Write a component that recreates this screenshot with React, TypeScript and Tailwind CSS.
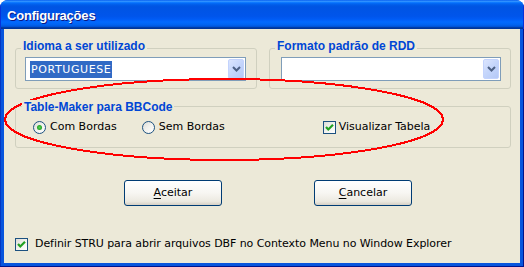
import React from "react";

const reg = "font-['DejaVu_Sans',sans-serif] text-[11px] text-black";
const boldLbl =
  "font-['Liberation_Sans',Arial,sans-serif] font-bold text-[12px] leading-[14px] text-[#0046d5]";

function Chevron() {
  return (
    <svg width="9" height="6" viewBox="0 0 9 6">
      <path d="M1 1 L4.5 4.5 L8 1" fill="none" stroke="#4d6185" strokeWidth="2" />
    </svg>
  );
}

function Combo({ width, selected }: { width: string; selected?: string }) {
  return (
    <div className={`${width} h-[24px] border border-[#7f9db9] bg-white flex items-center`}>
      {selected ? (
        <span
          className={`ml-[4px] h-[17px] px-[1px] leading-[17px] bg-[#316ac5] text-white font-['DejaVu_Sans',sans-serif] text-[11px] tracking-[0.6px]`}
        >
          {selected}
        </span>
      ) : null}
      <div className="ml-auto mr-[1px] w-[16px] h-[20px] rounded-[2px] border border-[#c3d3fd] bg-[linear-gradient(135deg,#dbe5fe_0%,#c4d5fb_50%,#b4c8f6_100%)] flex items-center justify-center">
        <Chevron />
      </div>
    </div>
  );
}

function Radio({ checked }: { checked?: boolean }) {
  return (
    <div className="w-[13px] h-[13px] rounded-full border border-[#1c5180] bg-[linear-gradient(135deg,#dcdcd7_0%,#f2f2ee_50%,#ffffff_100%)] flex items-center justify-center shrink-0">
      {checked ? (
        <div className="w-[5px] h-[5px] rounded-full bg-[radial-gradient(circle,#55d355_0%,#21a121_70%,#178c17_100%)]" />
      ) : null}
    </div>
  );
}

function Check() {
  return (
    <div className="w-[13px] h-[13px] border border-[#1c5180] bg-[linear-gradient(135deg,#dcdcd7_0%,#f2f2ee_50%,#ffffff_100%)] shrink-0 flex items-center justify-center">
      <svg width="11" height="11" viewBox="0 0 11 11">
        <path d="M2 5 L4.3 7.5 L9 2.8" fill="none" stroke="#21a121" strokeWidth="2.2" />
      </svg>
    </div>
  );
}

function XPButton({ first, rest }: { first: string; rest: string }) {
  return (
    <div className="w-[98px] h-[26px] rounded-[3px] border border-[#003c74] bg-[linear-gradient(180deg,#ffffff_0%,#f7f6f2_50%,#ece9e0_85%,#d6d0c5_100%)] flex items-center justify-center">
      <span className={reg}>
        <span className="underline underline-offset-[2px]">{first}</span>
        {rest}
      </span>
    </div>
  );
}

export default function App() {
  return (
    <div className="w-[524px] h-[267px] flex flex-col rounded-t-[8px] overflow-hidden bg-[#0855dd]">
      {/* Title bar */}
      <div className="h-[29px] shrink-0 flex items-center pl-[7px] pt-[2px] bg-[linear-gradient(180deg,#0058ee_0%,#3593ff_4%,#288eff_6%,#127dff_8%,#036ffc_10%,#0262ee_14%,#0057e5_20%,#0054e3_24%,#0055eb_56%,#005bf5_66%,#026afe_76%,#0062ef_86%,#0052d6_92%,#0040ab_94%,#003092_100%)] shadow-[inset_1px_0_#0831d9,inset_-1px_0_#0831d9]">
        <span className="font-['Liberation_Sans',Arial,sans-serif] font-bold text-[13px] tracking-[-0.2px] text-white [text-shadow:1px_1px_0_#0a1883]">
          Configurações
        </span>
      </div>

      {/* Frame + client */}
      <div className="flex-1 flex px-[4px] pb-[4px] bg-[linear-gradient(90deg,#0019a8_0px,#0855dd_1px,#0855dd_100%)] shadow-[inset_-1px_0_#00138c,inset_0_-1px_#00138c]">
        <div className="relative flex-1 bg-[#ece9d8] flex flex-col pt-[10px]">
          {/* Row 1 groups */}
          <div className="flex pl-[11px] gap-[12px]">
            <div className="w-[242px] flex flex-col">
              <span className={`${boldLbl} relative z-10 self-start ml-[6px] px-[2px] bg-[#ece9d8]`}>
                Idioma a ser utilizado
              </span>
              <div className="-mt-[5px] h-[41px] rounded-[3px] border border-[#d0d0bf] pt-[8px] pl-[9px]">
                <Combo width="w-[221px]" selected="PORTUGUESE" />
              </div>
            </div>
            <div className="w-[242px] flex flex-col">
              <span className={`${boldLbl} relative z-10 self-start ml-[6px] px-[2px] bg-[#ece9d8]`}>
                Formato padrão de RDD
              </span>
              <div className="-mt-[5px] h-[41px] rounded-[3px] border border-[#d0d0bf] pt-[8px] pl-[11px]">
                <Combo width="w-[220px]" />
              </div>
            </div>
          </div>

          {/* Group 3 */}
          <div className="mt-[11px] ml-[11px] w-[496px] flex flex-col">
            <span className={`${boldLbl} relative z-10 self-start ml-[7px] px-[2px] bg-[#ece9d8]`}>
              Table-Maker para BBCode
            </span>
            <div className="-mt-[8px] h-[42px] rounded-[3px] border border-[#d0d0bf] flex items-center pt-[1px] pl-[17px]">
              <div className="flex items-center gap-[4px]">
                <Radio checked />
                <span className={reg}>Com Bordas</span>
              </div>
              <div className="flex items-center gap-[4px] ml-[25px]">
                <Radio />
                <span className={reg}>Sem Bordas</span>
              </div>
              <div className="flex items-center gap-[3px] ml-[98px]">
                <Check />
                <span className={reg}>Visualizar Tabela</span>
              </div>
            </div>
          </div>

          {/* Buttons */}
          <div className="mt-[32px] ml-[120px] flex gap-[92px]">
            <XPButton first="A" rest="ceitar" />
            <XPButton first="C" rest="ancelar" />
          </div>

          {/* Bottom checkbox */}
          <div className="mt-[32px] ml-[11px] h-[13px] flex items-center">
            <Check />
            <span className={`${reg} ml-[7px] tracking-[-0.07px]`}>
              Definir STRU para abrir arquivos DBF no Contexto Menu no Window Explorer
            </span>
          </div>

          {/* Red ellipse annotation */}
          <svg
            className="absolute inset-0 w-full h-full pointer-events-none"
            viewBox="0 0 516 234"
          >
            <ellipse
              cx="220"
              cy="90.5"
              rx="219"
              ry="40.5"
              fill="none"
              stroke="#ff0000"
              strokeWidth="2"
              shapeRendering="crispEdges"
            />
          </svg>
        </div>
      </div>
    </div>
  );
}
